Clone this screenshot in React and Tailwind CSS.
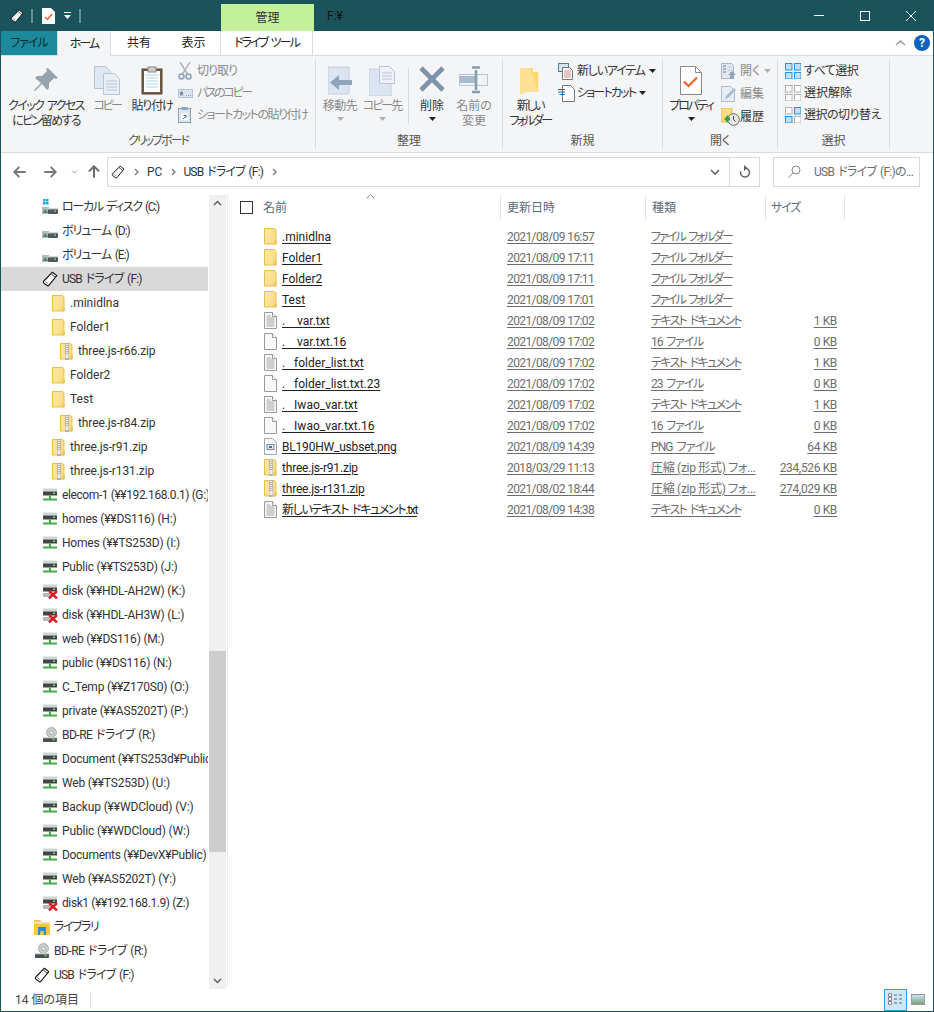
import React from "react";

const Folder = ({ zip }) => (
  <svg width="13" height="17" viewBox="0 0 13 17" className="shrink-0">
    <defs>
      <linearGradient id="fg" x1="0" y1="0" x2="1" y2="0.6">
        <stop offset="0" stopColor="#fde8a8" />
        <stop offset="1" stopColor="#fbdc84" />
      </linearGradient>
    </defs>
    <path d="M.5.5h10l1.5 1.5v14H.5z" fill="url(#fg)" stroke="#e9bf4a" />
    <path d="M10 16v-3h2.5v3z" fill="#f3cf68" stroke="#e9bf4a" strokeWidth=".6" />
    {zip && <path d="M5 0h4v17H5z" fill="#b9b5a8" />}
    {zip && <path d="M6 1h2v1H6zM6 3h2v1H6zM6 5h2v1H6zM6 7h2v1H6zM6 9h2v1H6zM5.5 11h3v4h-3z" fill="#ededed" />}
  </svg>
);
const Doc = ({ lines }) => (
  <svg width="13" height="17" viewBox="0 0 13 17" className="shrink-0">
    <path d="M.5.5h8l4 4v12H.5z" fill="#f7f8f9" stroke="#9a9a9a" />
    <path d="M8.5.5v4h4" fill="#fff" stroke="#9a9a9a" />
    {lines && <path d="M2.5 6h8M2.5 8h8M2.5 10h8M2.5 12h8M2.5 14h8M2.5 4h4" stroke="#a5a5a5" />}
  </svg>
);
const Png = () => (
  <svg width="13" height="17" viewBox="0 0 13 17" className="shrink-0">
    <path d="M.5.5h8l4 4v12H.5z" fill="#f7f8f9" stroke="#a5a5a5" />
    <rect x="3" y="6.5" width="7" height="5" fill="#dfe9f2" stroke="#7a8a98" />
    <rect x="5" y="8" width="3" height="2" fill="#4d6f8d" />
  </svg>
);
const Usb = ({ s = 16 }) => (
  <svg width={s} height={s} viewBox="0 0 16 16" className="shrink-0">
    <path d="M10.5 1.2l4.3 3.4-7.8 9.6a1.6 1.6 0 0 1-2.2.2L2 12.2a1.6 1.6 0 0 1-.2-2.2z" fill="#fff" stroke="#111" strokeWidth="1.1" strokeLinejoin="round" />
    <path d="M9.2 2.9l4.2 3.4" stroke="#111" strokeWidth=".8" />
    <path d="M3 10.3l3 2.4" stroke="#888" strokeWidth=".8" />
  </svg>
);
const Local = ({ win }) => (
  <svg width="16" height="16" viewBox="0 0 16 16" className="shrink-0">
    {win && <path d="M1 0h2.5v2.5H1zM4 0h2.5v2.5H4zM1 3h2.5v2.5H1zM4 3h2.5v2.5H4z" fill="#19a3e8" />}
    <path d="M0 8h7v7H0z" fill="#b8b8b8" />
    <path d="M1 13l2-3 2 2 1 2H1z" fill="#4f8a72" />
    <rect x="6" y="9" width="10" height="6" rx="1" fill="#4f5658" />
    <rect x="6" y="9" width="10" height="1.4" fill="#d4d6d6" />
    <rect x="12" y="11.5" width="2" height="1.5" fill="#59d35a" />
  </svg>
);
const Net = ({ x }) => (
  <svg width="16" height="16" viewBox="0 0 16 16" className="shrink-0">
    <rect x="1" y="1.5" width="14" height="3" fill="#d2d4d4" />
    <rect x="1" y="4.5" width="14" height="4" fill="#3f4547" />
    <rect x="11" y="5.5" width="2" height="1.5" fill="#6ddc6d" />
    {!x && <path d="M7 8.5h2v3h6v2H1v-2h6z" fill="#3fae49" />}
    {x && <path d="M1 10h8v4H1z" fill="#b8b8b8" />}
    {x && <path d="M7 8l8 7.5M15 8l-8 7.5" stroke="#e01b24" strokeWidth="2.4" />}
  </svg>
);
const Bd = () => (
  <svg width="16" height="16" viewBox="0 0 16 16" className="shrink-0">
    <circle cx="9.5" cy="5.5" r="5" fill="#c9cccc" stroke="#999" strokeWidth=".7" />
    <circle cx="9.5" cy="5.5" r="1.6" fill="#f5f5f5" stroke="#888" strokeWidth=".6" />
    <rect x="1" y="10" width="14" height="5" rx="1" fill="#484e50" />
    <rect x="1" y="10" width="14" height="1.3" fill="#d4d6d6" />
    <rect x="10.5" y="12" width="2" height="1.5" fill="#6ddc6d" />
  </svg>
);
const Lib = () => (
  <svg width="16" height="16" viewBox="0 0 16 16" className="shrink-0">
    <path d="M0 1h6l1.5 2H16v13H0z" fill="#f8c83f" />
    <path d="M0 3h16v1.5H0z" fill="#fdeaa3" />
    <path d="M4 8h8v8H9.8v-4H6.2v4H4z" fill="#2a8fd8" />
  </svg>
);

const tree = [
  ["ローカル ディスク (C:)", <Local win />, "pl-[41px] tracking-[-1.3px] [word-spacing:1.5px]"],
  ["ボリューム (D:)", <Local />, "pl-[41px] tracking-[-1px] [word-spacing:1.5px]"],
  ["ボリューム (E:)", <Local />, "pl-[41px] tracking-[-1px] [word-spacing:1.5px]"],
  ["USB ドライブ (F:)", <Usb />, "pl-[41px] tracking-[-0.8px] [word-spacing:1.5px]", true],
  [".minidlna", <Folder />, "pl-[49px]"],
  ["Folder1", <Folder />, "pl-[49px]"],
  ["three.js-r66.zip", <Folder zip />, "pl-[57px] tracking-[-0.1px]"],
  ["Folder2", <Folder />, "pl-[49px]"],
  ["Test", <Folder />, "pl-[49px]"],
  ["three.js-r84.zip", <Folder zip />, "pl-[57px] tracking-[-0.1px]"],
  ["three.js-r91.zip", <Folder zip />, "pl-[49px] tracking-[-0.1px]"],
  ["three.js-r131.zip", <Folder zip />, "pl-[49px] tracking-[-0.1px]"],
  ["elecom-1 (¥¥192.168.0.1) (G:)", <Net />, "pl-[41px] tracking-[-0.4px]"],
  ["homes (¥¥DS116) (H:)", <Net />, "pl-[41px] tracking-[-0.2px]"],
  ["Homes (¥¥TS253D) (I:)", <Net />, "pl-[41px] tracking-[-0.2px]"],
  ["Public (¥¥TS253D) (J:)", <Net />, "pl-[41px] tracking-[-0.2px]"],
  ["disk (¥¥HDL-AH2W) (K:)", <Net x />, "pl-[41px] tracking-[-0.2px]"],
  ["disk (¥¥HDL-AH3W) (L:)", <Net x />, "pl-[41px] tracking-[-0.2px]"],
  ["web (¥¥DS116) (M:)", <Net />, "pl-[41px] tracking-[-0.2px]"],
  ["public (¥¥DS116) (N:)", <Net />, "pl-[41px] tracking-[-0.2px]"],
  ["C_Temp (¥¥Z170S0) (O:)", <Net />, "pl-[41px] tracking-[-0.2px]"],
  ["private (¥¥AS5202T) (P:)", <Net />, "pl-[41px] tracking-[-0.2px]"],
  ["BD-RE ドライブ (R:)", <Bd />, "pl-[41px] tracking-[-0.5px] [word-spacing:1px]"],
  ["Document (¥¥TS253d¥Public) (T:)", <Net />, "pl-[41px] tracking-[-0.25px]"],
  ["Web (¥¥TS253D) (U:)", <Net />, "pl-[41px] tracking-[-0.2px]"],
  ["Backup (¥¥WDCloud) (V:)", <Net />, "pl-[41px] tracking-[-0.15px]"],
  ["Public (¥¥WDCloud) (W:)", <Net />, "pl-[41px] tracking-[-0.15px]"],
  ["Documents (¥¥DevX¥Public) (X:)", <Net />, "pl-[41px] tracking-[-0.3px]"],
  ["Web (¥¥AS5202T) (Y:)", <Net />, "pl-[41px] tracking-[-0.2px]"],
  ["disk1 (¥¥192.168.1.9) (Z:)", <Net x />, "pl-[41px] tracking-[-0.4px]"],
  ["ライブラリ", <Lib />, "pl-[33px] tracking-[-1.5px]"],
  ["BD-RE ドライブ (R:)", <Bd />, "pl-[33px] tracking-[-0.5px] [word-spacing:1px]"],
  ["USB ドライブ (F:)", <Usb />, "pl-[33px] tracking-[-0.8px] [word-spacing:1.5px]"],
];

const FF = "tracking-[-1.9px] [word-spacing:2px]";
const TD = "tracking-[-1.65px] [word-spacing:2px]";
const NF = "tracking-[-1.1px] [word-spacing:2px]";
const files = [
  [".minidlna", "2021/08/09 16:57", "ファイル フォルダー", "", <Folder />, "", FF],
  ["Folder1", "2021/08/09 17:11", "ファイル フォルダー", "", <Folder />, "", FF],
  ["Folder2", "2021/08/09 17:11", "ファイル フォルダー", "", <Folder />, "", FF],
  ["Test", "2021/08/09 17:01", "ファイル フォルダー", "", <Folder />, "", FF],
  [".\u00a0\u00a0\u00a0\u00a0var.txt", "2021/08/09 17:02", "テキスト ドキュメント", "1 KB", <Doc lines />, "", TD],
  [".\u00a0\u00a0\u00a0\u00a0var.txt.16", "2021/08/09 17:02", "16 ファイル", "0 KB", <Doc />, "", NF],
  [".\u00a0\u00a0\u00a0folder_list.txt", "2021/08/09 17:02", "テキスト ドキュメント", "1 KB", <Doc lines />, "", TD],
  [".\u00a0\u00a0\u00a0folder_list.txt.23", "2021/08/09 17:02", "23 ファイル", "0 KB", <Doc />, "", NF],
  [".\u00a0\u00a0\u00a0Iwao_var.txt", "2021/08/09 17:02", "テキスト ドキュメント", "1 KB", <Doc lines />, "", TD],
  [".\u00a0\u00a0\u00a0Iwao_var.txt.16", "2021/08/09 17:02", "16 ファイル", "0 KB", <Doc />, "", NF],
  ["BL190HW_usbset.png", "2021/08/09 14:39", "PNG ファイル", "64 KB", <Png />, "tracking-[-0.2px]", "tracking-[-0.9px] [word-spacing:2px]"],
  ["three.js-r91.zip", "2018/03/29 11:13", "圧縮 (zip 形式) フォ...", "234,526 KB", <Folder zip />, "tracking-[-0.2px]", "tracking-[-0.3px]"],
  ["three.js-r131.zip", "2021/08/02 18:44", "圧縮 (zip 形式) フォ...", "274,029 KB", <Folder zip />, "tracking-[-0.2px]", "tracking-[-0.3px]"],
  ["新しいテキスト ドキュメント.txt", "2021/08/09 14:38", "テキスト ドキュメント", "0 KB", <Doc lines />, "tracking-[-1.3px] [word-spacing:2px]", TD],
];

const Caret = ({ c = "#222" }) => (
  <svg width="7" height="4" viewBox="0 0 7 4"><path d="M0 0h7L3.5 4z" fill={c} /></svg>
);

const Big = ({ icon, label, w, dis, caret, tr }) => (
  <div className={`flex flex-col items-center shrink-0 ${w} ${dis ? "text-[#8a8a8a]" : "text-[#333]"}`}>
    <div className="h-[40px] pt-[7px] flex justify-center">{icon}</div>
    <div className={`text-center leading-[15px] whitespace-pre ${tr || ""}`}>{label}</div>
    {caret && <div className="mt-[3px]"><Caret c={dis ? "#b0b0b0" : "#222"} /></div>}
  </div>
);
const Small = ({ icon, label, dis, caret, tr }) => (
  <div className={`flex items-center whitespace-nowrap h-[22px] ${dis ? "text-[#8a8a8a]" : "text-[#333]"}`}>
    <div className="w-[19px] flex justify-start shrink-0">{icon}</div>
    <span className={tr || ""}>{label}</span>
    {caret && <span className="ml-[4px] mb-[1px]"><Caret c={dis ? "#b0b0b0" : "#222"} /></span>}
  </div>
);
const Group = ({ w, label, children, pl, tr }) => (
  <div className={`shrink-0 flex flex-col h-[90px] mt-[3px] border-r border-[#d9dbde] ${w}`}>
    <div className={`flex h-[75px] ${pl}`}>{children}</div>
    <div className={`text-center text-[#555] leading-[15px] mt-[2px] ${tr || ""}`}>{label}</div>
  </div>
);

const IPin = () => (
  <svg width="30" height="30" viewBox="0 0 30 30"><path d="M17 2l10 10-2 1-2-1-5 5 0 5-2 2-5-6-7 7-1-1 7-7-6-5 2-2 5 0 5-5-1-2z" fill="#95a3ab" /></svg>
);
const ICopy = () => (
  <svg width="26" height="29" viewBox="0 0 26 29">
    <path d="M.5.5h11l5 5v17H.5z" fill="#dfe7f3" stroke="#b8c4d4" />
    <path d="M9.5 7.5h11l5 5v16h-16z" fill="#e9eef6" stroke="#b8c4d4" />
    <path d="M12 15h11M12 18h11M12 21h11M12 24h11" stroke="#bcc6d6" />
  </svg>
);
const IPaste = () => (
  <svg width="22" height="29" viewBox="0 0 22 29">
    <rect x="1" y="3" width="20" height="25" fill="#6d5a45" stroke="#5b4936" />
    <rect x="3" y="5" width="16" height="21" fill="#fff" />
    <path d="M5 9h12M5 12h12M5 15h12M5 18h12M5 21h12" stroke="#a9d0f0" />
    <rect x="7" y="1" width="8" height="5" fill="#ccc" stroke="#888" />
  </svg>
);
const IMove = () => (
  <svg width="24" height="29" viewBox="0 0 24 29">
    <path d="M0 1h21v27H0z" fill="#dbe4f0" stroke="#c6d0de" />
    <path d="M10 11v5h13v5H10v5l-9-7.5z" fill="#8fa5bc" transform="translate(1,-2)" />
  </svg>
);
const ICopyTo = () => (
  <svg width="26" height="30" viewBox="0 0 26 30">
    <path d="M0 3h22v27H0z" fill="#dbe4f0" stroke="#c6d0de" />
    <path d="M10.5.5h10l5 5v12h-15z" fill="#eef2f8" stroke="#b8c4d4" />
    <path d="M13 7h10M13 10h10M13 13h10" stroke="#bcc6d6" />
  </svg>
);
const IDel = () => (
  <svg width="26" height="26" viewBox="0 0 26 26"><path d="M2 2l22 22M24 2L2 24" stroke="#7f94ac" strokeWidth="4.6" /></svg>
);
const IRen = () => (
  <svg width="30" height="28" viewBox="0 0 30 28">
    <rect x=".5" y="8.5" width="28" height="11" fill="#f0f4f9" stroke="#b8c4d4" />
    <rect x="1" y="10" width="15" height="7" fill="#a9bbd0" />
    <path d="M17 4v20M13 1.5h8M13 26h8" stroke="#8a9cb0" strokeWidth="2.6" />
  </svg>
);
const IFolder = () => (
  <svg width="20" height="28" viewBox="0 0 20 28">
    <path d="M0 2h13v4h5v20H5l-1 1.5H0z" fill="#fbd771" />
    <path d="M0 2h10l8 22V6h1v20H4v2H0z" fill="#fde8a8" opacity=".6" />
    <path d="M15 1v4" stroke="#f3e8c0" />
  </svg>
);
const IProp = () => (
  <svg width="22" height="29" viewBox="0 0 22 29">
    <path d="M.5.5h15l6 6v22H.5z" fill="#fff" stroke="#888" />
    <path d="M15.5.5v6h6" fill="none" stroke="#888" />
    <path d="M4 15.5l4.5 4.5L17 11.5" fill="none" stroke="#f0632a" strokeWidth="2.2" />
  </svg>
);
const INewItem = () => (
  <svg width="17" height="17" viewBox="0 0 17 17">
    <rect x=".5" y=".5" width="10" height="8" fill="#d5e6f3" stroke="#4d7b9a" />
    <path d="M4.5 4.5h7l3 3v9h-10z" fill="#fff" stroke="#777" />
    <path d="M6 8h7M6 10h7M6 12h7M6 14h7" stroke="#c98a8a" />
  </svg>
);
const IShort = () => (
  <svg width="17" height="17" viewBox="0 0 17 17">
    <path d="M4.5.5h8l4 4v12h-12z" fill="#fff" stroke="#777" />
    <path d="M0 4.5h7M0 7h7M1.5 9.5h5" stroke="#1c6bb3" />
  </svg>
);
const IOpen = () => (
  <svg width="16" height="16" viewBox="0 0 16 16">
    <path d="M.5.5h10l2 2v13H.5z" fill="#e2e8f1" stroke="#a9b6c6" />
    <path d="M2 3h3M2 6h3M2 9h3" stroke="#8fa0b5" strokeWidth="1.6" />
    <path d="M7 4h4M7 7h4" stroke="#c0cad7" />
    <path d="M10 8l4 4h-2v4h-4v-4H6z" fill="#8fa5bc" transform="translate(1,0)" />
  </svg>
);
const IEdit = () => (
  <svg width="16" height="16" viewBox="0 0 16 16">
    <path d="M.5.5h9l4 4v11H.5z" fill="#e6ecf4" stroke="#b0bccb" />
    <path d="M4 13l1-3 8-8 2 2-8 8z" fill="#a9bbd0" />
  </svg>
);
const IHist = () => (
  <svg width="19" height="18" viewBox="0 0 19 18">
    <path d="M0 0h11v14H0z" fill="#fbdc84" stroke="#e9bf4a" />
    <circle cx="12.5" cy="11.5" r="5.8" fill="#e6e6e6" stroke="#666" />
    <path d="M12.5 8v3.5l2 2" stroke="#444" fill="none" />
    <path d="M3 11l4-4v2.5h2v3H7V15z" fill="#2aa640" />
  </svg>
);
const ISelect = ({ on = [1, 1, 1, 1] }) => (
  <svg width="16" height="16" viewBox="0 0 16 16">
    {[[0, 0], [9, 0], [0, 9], [9, 9]].map(([x, y], i) => (
      <rect key={i} x={x + 0.5} y={y + 0.5} width="6.5" height="6.5" fill={on[i] ? "#bfe0f6" : "#fff"} stroke={on[i] ? "#2b93dc" : "#b0b0b0"} />
    ))}
  </svg>
);
const ICut = () => (
  <svg width="14" height="18" viewBox="0 0 14 18" fill="none" stroke="#aab6c4" strokeWidth="1.5">
    <path d="M2 0l7.5 12M12 0L4.5 12" stroke="#b0b4b8" />
    <circle cx="3.5" cy="14.5" r="2.5" stroke="#8ba1ba" />
    <circle cx="10.5" cy="14.5" r="2.5" stroke="#8ba1ba" />
  </svg>
);
const IPath = () => (
  <svg width="15" height="9" viewBox="0 0 15 9">
    <rect x=".5" y=".5" width="14" height="8" fill="#dbe4f0" stroke="#b8c4d4" />
    <path d="M2 2.5l1 4 1-4 1 4M8 6.5h.8M10 6.5h.8M12 6.5h.8" stroke="#5d7088" strokeWidth=".8" fill="none" />
  </svg>
);
const IPasteShort = () => (
  <svg width="13" height="16" viewBox="0 0 13 16">
    <rect x=".5" y="1.5" width="12" height="14" fill="#dbe4f0" stroke="#8ba1ba" />
    <rect x="3.5" y="0" width="6" height="3" fill="#8ba1ba" />
    <rect x="3" y="6" width="7" height="7" fill="#fff" />
    <path d="M5 12l3-3M5.5 8.5H8V11" stroke="#4d6f8d" fill="none" />
  </svg>
);
const Chev = ({ d, c = "#606060", w = 11 }) => (
  <svg width={w} height={w} viewBox="0 0 11 11" className="shrink-0"><path d={d} fill="none" stroke={c} strokeWidth="1.5" /></svg>
);
const Crumb = () => <span className="mx-[9px]"><svg width="5" height="8" viewBox="0 0 5 8"><path d="M1 1l3 3-3 3" fill="none" stroke="#777" strokeWidth="1.3" /></svg></span>;

export default function App() {
  return (
    <div className="w-[934px] h-[1012px] flex flex-col overflow-hidden bg-white border-x border-b border-[#1b535d] text-[12px] text-[#222] font-['Roboto','Noto_Sans_CJK_JP',sans-serif] [font-feature-settings:'palt']">
      {/* title */}
      <div className="h-[31px] shrink-0 bg-[#1b535d] flex items-end">
        <div className="w-[220px] h-[31px] flex items-center pl-[9px]">
          <Usb s={14} />
          <span className="ml-[7px] w-[2px] h-[14px] border-x border-[#6d8d93]" />
          <span className="ml-[9px]"><svg width="13" height="16" viewBox="0 0 13 16"><path d="M0 0h9l4 4v12H0z" fill="#fff" /><path d="M3 9l2.5 2.5L10 6" fill="none" stroke="#f0632a" strokeWidth="1.5" /></svg></span>
          <span className="ml-[9px] flex flex-col gap-[2px] items-center"><span className="w-[7px] h-px bg-white" /><Caret c="#fff" /></span>
          <span className="ml-[8px] w-[2px] h-[14px] border-x border-[#6d8d93]" />
        </div>
        <div className="w-[93px] h-[27px] bg-[#c3f09a] flex items-center justify-center text-[#333]">管理</div>
        <div className="h-[31px] flex items-center ml-[13px] text-[#111] grow">F:¥</div>
        <div className="h-[31px] flex items-center text-white">
          <div className="w-[46px] flex justify-center"><span className="w-[10px] h-px bg-white" /></div>
          <div className="w-[46px] flex justify-center"><span className="w-[10px] h-[10px] border border-white" /></div>
          <div className="w-[45px] flex justify-center"><svg width="10" height="10" viewBox="0 0 10 10"><path d="M0 0l10 10M10 0L0 10" stroke="#fff" /></svg></div>
        </div>
      </div>
      {/* tabs */}
      <div className="h-[24px] shrink-0 bg-white flex relative">
        <div className="w-[56px] bg-[#1b8a9c] flex items-center justify-center text-[#0d2a30] tracking-[-1px]">ファイル</div>
        <div className="w-[54px] h-[25px] z-10 bg-[#f4f5f7] border-x border-[#d9dbde] flex items-center justify-center tracking-[-2px]">ホーム</div>
        <div className="w-[56px] flex items-center justify-center">共有</div>
        <div className="w-[53px] flex items-center justify-center">表示</div>
        <div className="w-[93px] flex items-center justify-center border-x border-[#d9dbde] tracking-[-1.9px] [word-spacing:2px]">ドライブ ツール</div>
        <div className="grow flex items-center justify-end pr-[3px] gap-[8px]">
          <Chev d="M1 7l4.5-4 4.5 4" c="#999" />
          <span className="w-[16px] h-[16px] rounded-full bg-[#0c63bd] text-white font-bold flex items-center justify-center text-[12px] leading-none">?</span>
        </div>
      </div>
      {/* ribbon */}
      <div className="h-[98px] shrink-0 bg-[#f4f5f7] border-y border-[#dadbdc] flex">
        <Group w="w-[315px]" label="クリップボード" pl="pl-[5px]" tr="tracking-[-2px]">
          <Big w="w-[80px]" tr="tracking-[-1.6px] [word-spacing:2px]" icon={<IPin />} label={"クイック アクセス\nにピン留めする"} />
          <Big w="w-[42px]" tr="tracking-[-2.5px]" dis icon={<ICopy />} label="コピー" />
          <Big w="w-[48px]" tr="tracking-[-1.2px]" icon={<IPaste />} label="貼り付け" />
          <div className="flex flex-col pt-[1px] ml-[2px]">
            <Small dis tr="tracking-[-1px]" icon={<ICut />} label="切り取り" />
            <Small dis tr="tracking-[-2.4px]" icon={<IPath />} label="パスのコピー" />
            <Small dis tr="tracking-[-1.5px]" icon={<IPasteShort />} label="ショートカットの貼り付け" />
          </div>
        </Group>
        <Group w="w-[187px]" label="整理" pl="pl-[3px]">
          <Big w="w-[42px]" tr="tracking-[-0.5px]" dis caret icon={<IMove />} label="移動先" />
          <Big w="w-[42px]" tr="tracking-[-2px]" dis caret icon={<ICopyTo />} label="コピー先" />
          <div className="w-px h-[56px] bg-[#d9dbde] mt-[9px] ml-[5px]" />
          <Big w="w-[46px]" caret icon={<IDel />} label="削除" />
          <Big w="w-[38px]" dis icon={<IRen />} label={"名前の\n変更"} />
        </Group>
        <Group w="w-[160px]" label="新規" pl="pl-[3px]">
          <Big w="w-[48px]" tr="tracking-[-2.4px]" icon={<IFolder />} label={"新しい\nフォルダー"} />
          <div className="flex flex-col ml-[4px] pt-[1px]">
            <Small tr="tracking-[-1.2px]" icon={<INewItem />} label="新しいアイテム" caret />
            <Small tr="tracking-[-1.8px]" icon={<IShort />} label="ショートカット" caret />
          </div>
        </Group>
        <Group w="w-[115px]" label="開く" pl="pl-[3px]">
          <Big w="w-[50px]" tr="tracking-[-2px]" caret icon={<IProp />} label="プロパティ" />
          <div className="flex flex-col ml-[5px] pt-[1px] gap-[1px]">
            <Small dis icon={<IOpen />} label="開く" caret />
            <Small dis icon={<IEdit />} label="編集" />
            <Small icon={<IHist />} label="履歴" />
          </div>
        </Group>
        <Group w="w-[112px]" label="選択" pl="pl-[7px]">
          <div className="flex flex-col pt-[1px]">
            <Small tr="tracking-[-0.5px]" icon={<ISelect />} label="すべて選択" />
            <Small icon={<ISelect on={[0, 0, 0, 0]} />} label="選択解除" />
            <Small tr="tracking-[-0.5px]" icon={<ISelect on={[0, 1, 1, 0]} />} label="選択の切り替え" />
          </div>
        </Group>
      </div>
      {/* address */}
      <div className="h-[37px] shrink-0 flex items-center pl-[12px]">
        <Chev d="M10 5.5H1M5 1.5l-4 4 4 4" w={14} c="#777" />
        <span className="w-[16px]" />
        <Chev d="M1 5.5h9M6 1.5l4 4-4 4" w={14} c="#777" />
        <span className="w-[9px] flex justify-center ml-[13px]"><svg width="7" height="4" viewBox="0 0 7 4"><path d="M1 .5l2.5 2.5L6 .5" fill="none" stroke="#999" /></svg></span>
        <span className="ml-[8px]"><Chev d="M5.5 10V1M1.5 5l4-4 4 4" w={14} c="#666" /></span>
        <div className="ml-[6px] w-[653px] h-[30px] border border-[#d9d9d9] flex items-center">
          <span className="ml-[3px]"><Usb s={14} /></span>
          <Crumb />
          <span className="text-[#333] -ml-px">PC</span>
          <Crumb />
          <span className="text-[#333] -ml-[2px] tracking-[-0.8px] [word-spacing:1.5px]">USB ドライブ (F:)</span>
          <Crumb />
          <span className="grow" />
          <span className="mr-[9px]"><svg width="10" height="6" viewBox="0 0 10 6"><path d="M1 1l4 4 4-4" fill="none" stroke="#666" strokeWidth="1.6" /></svg></span>
          <div className="w-[30px] h-full border-l border-[#d9d9d9] flex items-center justify-center">
            <svg width="12" height="13" viewBox="0 0 12 13"><path d="M6 3a4.5 4.5 0 1 1-4.3 3.2" fill="none" stroke="#666" strokeWidth="1.5" /><path d="M5 0l3.5 3L5 6z" fill="#666" /></svg>
          </div>
        </div>
        <div className="ml-[13px] w-[147px] h-[30px] border border-[#d9d9d9] flex items-center">
          <span className="ml-[14px]"><svg width="13" height="13" viewBox="0 0 13 13"><circle cx="8" cy="5" r="4" fill="none" stroke="#888" /><path d="M5 8l-4.5 4.5" stroke="#888" /></svg></span>
          <span className="ml-[13px] text-[#6d6d6d] whitespace-nowrap tracking-[-0.7px] [word-spacing:1.5px]">USB ドライブ (F:)の...</span>
        </div>
      </div>
      {/* body */}
      <div className="flex grow min-h-0">
        <div className="w-[225px] shrink-0 flex pt-[5px] pb-[1px]">
          <div className="w-[207px] shrink-0 overflow-hidden">
            {tree.map(([t, ic, pl, sel], i) => (
              <div key={i} className={`h-[24px] flex items-center whitespace-nowrap text-[#333] ${pl} ${sel ? "bg-[#d9d9d9]" : ""}`}>
                <span className="w-[16px] mr-[4px] flex justify-center shrink-0">{ic}</span>
                <span>{t}</span>
              </div>
            ))}
          </div>
          <div className="w-[17px] ml-[1px] mb-[-2px] bg-[#f0f0f0] flex flex-col items-center relative">
            <div className="h-[17px] flex items-center"><Chev d="M2 7l3.5-3.5L9 7" c="#606060" /></div>
            <div className="h-[439px]" />
            <div className="w-full h-[201px] bg-[#cdcdcd]" />
            <div className="grow" />
            <div className="h-[17px] flex items-center"><Chev d="M2 4l3.5 3.5L9 4" c="#606060" /></div>
          </div>
        </div>
        <div className="w-px ml-[1px] bg-[#ececec] mt-[5px] mb-[1px]" />
        <div className="grow relative">
          <div className="absolute left-[138px] top-[4px]"><svg width="9" height="5" viewBox="0 0 9 5"><path d="M.5 4.5l4-4 4 4" fill="none" stroke="#888" /></svg></div>
          <div className="flex h-[25px] mt-[5px] text-[#5a6a7a]">
            <div className="w-[273px] flex items-center pl-[12px] border-r border-[#e5e5e5]">
              <span className="w-[13px] h-[13px] border border-[#333] mr-[10px]" />
              <span>名前</span>
            </div>
            <div className="w-[145px] flex items-center pl-[6px] border-r border-[#e5e5e5]">更新日時</div>
            <div className="w-[120px] flex items-center pl-[6px] border-r border-[#e5e5e5]">種類</div>
            <div className="w-[79px] flex items-center pl-[5px] border-r border-[#e5e5e5] tracking-[-1.2px]">サイズ</div>
          </div>
          <div className="mt-[6px]">
            {files.map(([n, d, t, s, ic, ntr, ttr], i) => (
              <div key={i} className="h-[21px] flex items-center whitespace-nowrap">
                <div className="w-[272px] flex items-center pl-[36px] gap-[5px]">
                  {ic}
                  <span className={`underline underline-offset-2 text-[#222] ${ntr}`}>{n}</span>
                </div>
                <div className="w-[145px] pl-[7px] text-[#6d6d6d] underline underline-offset-2 tracking-[-0.6px]">{d}</div>
                <div className={`w-[120px] pl-[6px] text-[#6d6d6d] underline underline-offset-2 ${ttr}`}>{t}</div>
                <div className="w-[72px] text-right text-[#6d6d6d] underline underline-offset-2 tracking-[-0.35px]">{s}</div>
              </div>
            ))}
          </div>
        </div>
      </div>
      {/* status */}
      <div className="h-[23px] shrink-0 flex items-center pl-[14px] text-[#444] relative">
        <span className="pr-[11px] border-r border-[#e5e5e5] leading-[16px]">14 個の項目</span>
        <span className="grow" />
        <div className="w-[23px] h-[22px] bg-[#cce8f8] border border-[#2ea4e0] flex items-center justify-center">
          <svg width="16" height="13" viewBox="0 0 16 13"><path d="M.5.5h3v3h-3zM.5 4.5h3v3h-3zM.5 8.5h3v3h-3z" fill="#fff" stroke="#888" /><path d="M6 2h3M11 2h3M6 6h3M11 6h3M6 10h3M11 10h3" stroke="#666" /></svg>
        </div>
        <div className="w-[14px] h-[11px] ml-[4px] mr-[8px] border border-[#999] bg-[linear-gradient(#cde3f2,#7ba37f)]" />
      </div>
    </div>
  );
}
